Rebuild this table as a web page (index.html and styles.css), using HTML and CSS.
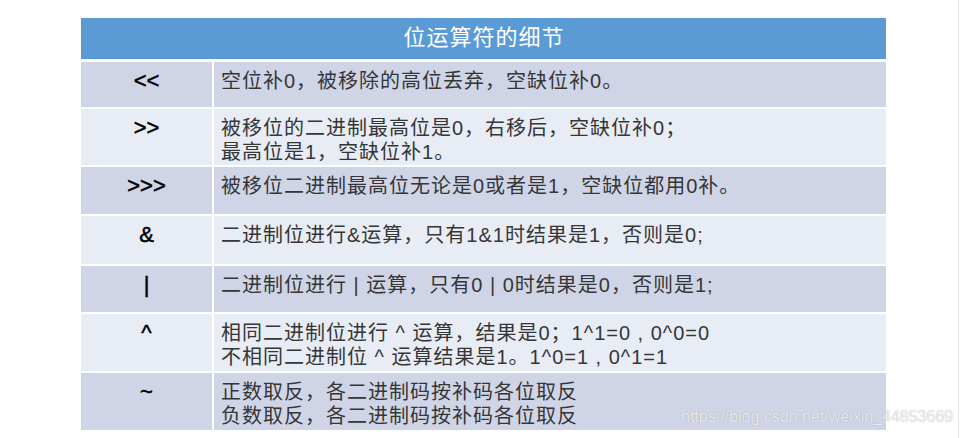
FILE: index.html
```html
<!DOCTYPE html>
<html lang="zh-CN">
<head>
<meta charset="utf-8">
<title>位运算符的细节</title>
<link rel="stylesheet" href="styles.css">
</head>
<body>
<div class="page">
  <div class="table">
    <div class="head">位运算符的细节</div>
    <div class="op odd">&lt;&lt;</div>
    <div class="desc odd">空位补0，被移除的高位丢弃，空缺位补0。</div>
    <div class="op even">&gt;&gt;</div>
    <div class="desc even">被移位的二进制最高位是0，右移后，空缺位补0；<br>最高位是1，空缺位补1。</div>
    <div class="op odd">&gt;&gt;&gt;</div>
    <div class="desc odd">被移位二进制最高位无论是0或者是1，空缺位都用0补。</div>
    <div class="op even">&amp;</div>
    <div class="desc even">二进制位进行&amp;运算，只有1&amp;1时结果是1，否则是0;</div>
    <div class="op odd">|</div>
    <div class="desc odd">二进制位进行 | 运算，只有0 | 0时结果是0，否则是1;</div>
    <div class="op even">^</div>
    <div class="desc even">相同二进制位进行 ^ 运算，结果是0；1^1=0 , 0^0=0<br>不相同二进制位 ^ 运算结果是1。1^0=1 , 0^1=1</div>
    <div class="op odd">~</div>
    <div class="desc odd">正数取反，各二进制码按补码各位取反<br>负数取反，各二进制码按补码各位取反</div>
  </div>
  <div class="watermark">https://blog.csdn.net/weixin_44853669</div>
</div>
</body>
</html>
```

FILE: styles.css
```css
html, body {
  margin: 0;
  padding: 0;
  background: #ffffff;
}

.page {
  position: relative;
  width: 959px;
  height: 438px;
  border-right: 1px solid #e2e2e2;
  padding: 18px 0 0 81px;
  box-sizing: border-box;
  font-family: "Liberation Sans", "Noto Sans CJK SC", sans-serif;
}

.table {
  display: grid;
  width: 805px;
  grid-template-columns: 131px 672px;
  grid-template-rows: 42px 45px 56px 47px 48px 46px 57px 57px;
  column-gap: 2px;
  row-gap: 2px;
  background: #ffffff;
}

.head {
  grid-column: 1 / 3;
  margin-bottom: 1px;
  background: #5b9bd5;
  color: #ffffff;
  font-size: 22px;
  letter-spacing: 1px;
  line-height: 40px;
  text-align: center;
  padding-left: 1px;
}

.odd {
  background: #cfd5e6;
}

.even {
  background: #e8ecf4;
}

.op {
  text-align: center;
  font-family: "Liberation Sans", sans-serif;
  font-size: 22px;
  line-height: 24px;
  padding-top: 7px;
  color: #000000;
  -webkit-text-stroke: 0.5px #000000;
}

.desc {
  font-size: 20px;
  letter-spacing: 1px;
  line-height: 24px;
  padding: 7px 0 0 7px;
  color: #363636;
  white-space: nowrap;
}

.watermark {
  position: absolute;
  left: 681px;
  top: 407px;
  font-family: "Liberation Sans", sans-serif;
  font-size: 16px;
  line-height: 20px;
  color: rgba(255, 255, 255, 0.75);
  text-shadow: 0 0 1px rgba(110, 110, 110, 0.55);
  white-space: nowrap;
}
```
